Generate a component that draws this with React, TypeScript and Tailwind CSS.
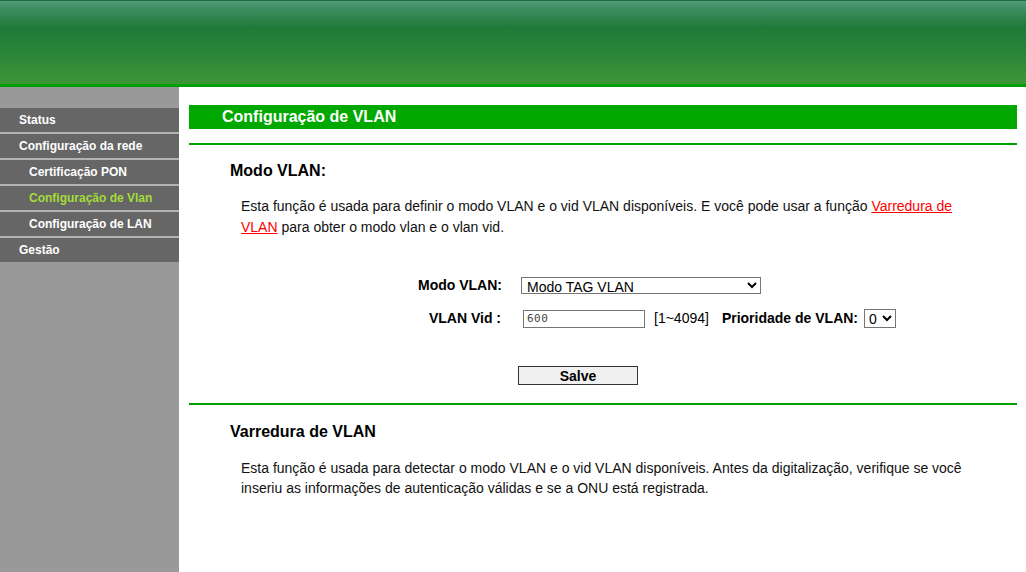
const MENU = [
  { label: "Status", sub: false, active: false },
  { label: "Configuração da rede", sub: false, active: false },
  { label: "Certificação PON", sub: true, active: false },
  { label: "Configuração de Vlan", sub: true, active: true },
  { label: "Configuração de LAN", sub: true, active: false },
  { label: "Gestão", sub: false, active: false },
];

function Sidebar() {
  return (
    <aside className="w-[179px] shrink-0 bg-[#999999] pt-[21px]">
      <ul className="flex flex-col">
        {MENU.map((m, i) => (
          <li
            key={m.label}
            className={`flex h-[24px] items-center bg-[#666666] text-[12px] font-bold ${
              m.sub ? "pl-[29px]" : "pl-[19px]"
            } ${m.active ? "text-[#a4dc3a]" : "text-white"} ${
              i < MENU.length - 1 ? "border-b-2 border-[#b3b3b3] box-content" : ""
            }`}
          >
            {m.label}
          </li>
        ))}
      </ul>
    </aside>
  );
}

export default function App() {
  return (
    <div
      className="flex h-[572px] flex-col overflow-hidden bg-white text-black"
      style={{ fontFamily: '"Liberation Sans", Arial, sans-serif' }}
    >
      {/* Top banner */}
      <header className="h-[84px] shrink-0 border-t border-[#196a3f] bg-[linear-gradient(to_bottom,#519c75_0%,#3d8c5f_10%,#1f7a39_32%,#288439_60%,#409538_100%)]" />
      <div className="h-[3px] shrink-0 bg-[#00a000]" />

      <div className="flex flex-1">
        <Sidebar />

        <main className="flex-1 pl-[10px] pr-[9px]">
          <div className="mt-[18px] flex h-[24px] items-center bg-[#00a800] pl-[33px] text-[16px] font-bold text-white">
            Configuração de VLAN
          </div>
          <div className="mt-[14px] h-[2px] bg-[#00a000]" />

          <h2 className="mt-[16px] pl-[41px] text-[16px] font-bold leading-[20px]">Modo VLAN:</h2>
          <p className="mt-[15px] pl-[52px] pr-[50px] text-[14px] leading-[21px] text-[#111]">
            Esta função é usada para definir o modo VLAN e o vid VLAN disponíveis. E você pode usar a função{" "}
            <a href="#" className="text-[#ff0000] underline">
              Varredura de VLAN
            </a>{" "}
            para obter o modo vlan e o vlan vid.
          </p>

          {/* Form */}
          <div className="mt-[38px] flex flex-col text-[14px]">
            <div className="flex h-[18px] items-center">
              <label className="w-[313px] text-right font-bold">Modo VLAN:</label>
              <select
                defaultValue="tag"
                className="ml-[19px] h-[17px] w-[240px] border border-[#767676] bg-white py-0 pl-[1px] text-[14px] leading-[14px]"
                style={{ fontFamily: '"Liberation Sans", Arial, sans-serif' }}
              >
                <option value="transparent">Modo Transparente</option>
                <option value="tag">Modo TAG VLAN</option>
              </select>
            </div>

            <div className="mt-[15px] flex h-[19px] items-center">
              <label className="w-[312px] text-right font-bold">VLAN Vid :</label>
              <input
                defaultValue="600"
                className="ml-[22px] h-[18px] w-[122px] border border-[#767676] px-[3px] text-[11px] text-[#444] outline-none"
                style={{ fontFamily: '"DejaVu Sans Mono", monospace', letterSpacing: "0.5px" }}
              />
              <span className="ml-[9px]">[1~4094]</span>
              <span className="ml-[13px] font-bold">Prioridade de VLAN:</span>
              <select
                defaultValue="0"
                className="ml-[6px] h-[19px] w-[32px] border border-[#767676] bg-white py-0 text-[14px] leading-[14px]"
                style={{ fontFamily: '"Liberation Sans", Arial, sans-serif' }}
              >
                {[0, 1, 2, 3, 4, 5, 6, 7].map((n) => (
                  <option key={n} value={String(n)}>
                    {n}
                  </option>
                ))}
              </select>
            </div>

            <div className="mt-[38px] flex">
              <button className="ml-[329px] flex h-[19px] w-[120px] items-center justify-center border border-[#333] bg-[#f0f0f0] text-[14px] font-bold leading-[14px]">
                Salve
              </button>
            </div>
          </div>

          <div className="mt-[18px] h-[2px] bg-[#00a000]" />

          <h2 className="mt-[17px] pl-[41px] text-[16px] font-bold leading-[20px]">Varredura de VLAN</h2>
          <p className="mt-[16px] pl-[52px] pr-[50px] text-[14px] leading-[20px] text-[#111]">
            Esta função é usada para detectar o modo VLAN e o vid VLAN disponíveis. Antes da digitalização, verifique se você inseriu as informações de autenticação válidas e se a ONU está registrada.
          </p>
        </main>
      </div>
    </div>
  );
}
